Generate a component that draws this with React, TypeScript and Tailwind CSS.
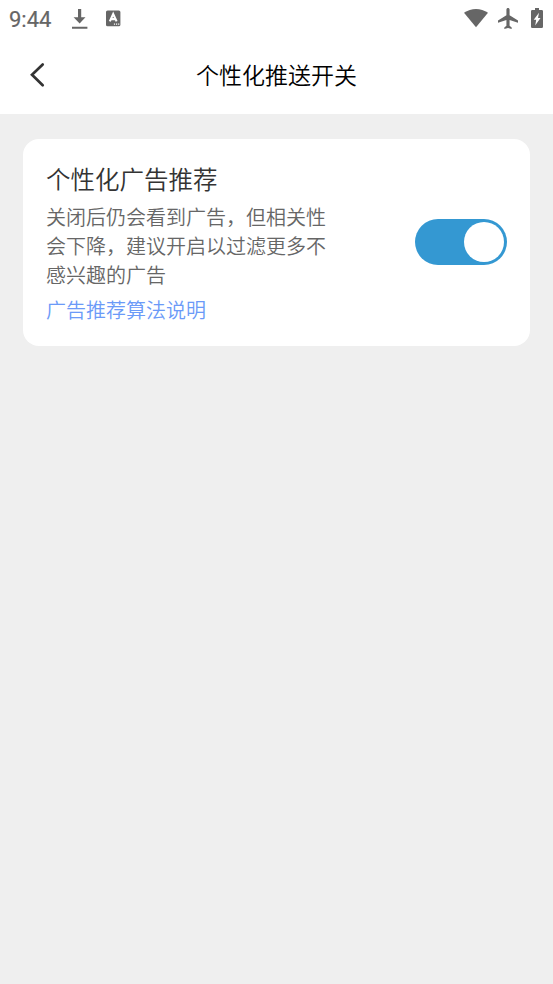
import { useState } from 'react';

function StatusBar() {
  return (
    <div className="flex h-[38px] items-start justify-between text-[#666666]">
      <div className="flex items-start">
        <span className="ml-[9px] mt-[8px] w-[44px] whitespace-nowrap font-['Roboto',sans-serif] text-[22px] font-normal leading-6 [-webkit-text-stroke:0.2px_#666]">
          9:44
        </span>
        <svg className="ml-[18px] mt-[9px]" width="17" height="20" viewBox="0 0 17 20" fill="currentColor">
          <path d="M7 0h3.200v8.300h4.300L8.600 14.600 2.600 8.300H7zM1 17.700h15.400v2.100H1z" />
        </svg>
        <svg className="ml-[18px] mt-[10px]" width="15" height="17" viewBox="0 0 15 17">
          <rect y="0.5" width="14.400" height="15.800" rx="1.600" fill="currentColor" />
          <path d="M3.800 11.400 7.200 4.100l3.400 7.300M5 9.100h4.400" fill="none" stroke="#fff" strokeWidth="2.100" />
          <path d="M7.900 13.500h1.200v1.200H7.900zM10 13.500h1.200v1.200H10zM12.100 13.500h1.200v1.200h-1.200z" fill="#fff" />
        </svg>
      </div>
      <div className="flex items-start">
        <svg className="mt-[8px]" width="25" height="20" viewBox="0 0 25 20" fill="currentColor">
          <path d="M0 4.800C7.200-0.400 16.800-0.400 24 4.800L12 19.300z" />
        </svg>
        <svg className="ml-[9px] mt-[8px]" width="20" height="21" viewBox="2 2 19 20" preserveAspectRatio="none" fill="currentColor">
          <path d="M21 16v-2l-8-5V3.500c0-.83-.67-1.500-1.500-1.500S10 2.670 10 3.500V9l-8 5v2l8-2.500V19l-2 1.500V22l3.500-1 3.500 1v-1.500L13 19v-5.500z" />
        </svg>
        <svg className="ml-[13px] mr-[10px] mt-[8px]" width="12" height="20" viewBox="0 0 12 20">
          <path
            d="M4 0h4v2h2.700Q12 2 12 3.300V18.700Q12 20 10.700 20H1.300Q0 20 0 18.700V3.300Q0 2 1.300 2H4z"
            fill="currentColor"
          />
          <path d="M8 4.700 2.700 11.700h2.500L4.200 17.500 9.500 9.900H7z" fill="#fff" />
        </svg>
      </div>
    </div>
  );
}

function Header() {
  return (
    <header className="grid h-[74px] grid-cols-[75px_1fr_75px] items-center">
      <button type="button" aria-label="返回" className="pl-[29px]">
        <svg width="16" height="26" viewBox="0 0 16 26" fill="none" stroke="#333" strokeWidth="2.700" strokeLinecap="round">
          <path d="M13.700 2.500 3 12.800l10.700 10.500" />
        </svg>
      </button>
      <h1 className="mb-[2px] text-center text-[23px] leading-8 text-black">个性化推送开关</h1>
    </header>
  );
}

type ToggleProps = {
  checked: boolean;
  onChange: (checked: boolean) => void;
};

function Toggle({ checked, onChange }: ToggleProps) {
  return (
    <button
      type="button"
      role="switch"
      aria-checked={checked}
      aria-label="个性化广告推荐"
      onClick={() => onChange(!checked)}
      className={`mb-[0.5px] flex h-[46px] w-[92px] shrink-0 items-center rounded-full px-[3px] ${
        checked ? 'justify-end bg-[#3498d2]' : 'justify-start bg-gray-300'
      }`}
    >
      <span className="size-10 rounded-full bg-white" />
    </button>
  );
}

export default function App() {
  const [enabled, setEnabled] = useState(true);

  return (
    <div className="min-h-screen bg-[#efefef] font-['Noto_Sans_CJK_SC',sans-serif] font-[350]">
      <div className="h-[114px] bg-white">
        <StatusBar />
        <Header />
      </div>
      <main className="px-[23px] pt-[25px]">
        <section className="flex h-[207px] items-center justify-between rounded-[16px] bg-white px-[23px]">
          <div className="w-[290px]">
            <h2 className="text-[24.5px] leading-9 text-[#333]">个性化广告推荐</h2>
            <p className="mt-[5px] w-[281px] text-[20px] leading-[29px] text-[#666]">
              关闭后仍会看到广告，但相关性会下降，建议开启以过滤更多不感兴趣的广告
            </p>
            <a href="#algorithm" className="mt-[6px] block text-[20px] leading-[29px] text-[#6b9af8]">
              广告推荐算法说明
            </a>
          </div>
          <Toggle checked={enabled} onChange={setEnabled} />
        </section>
      </main>
    </div>
  );
}
